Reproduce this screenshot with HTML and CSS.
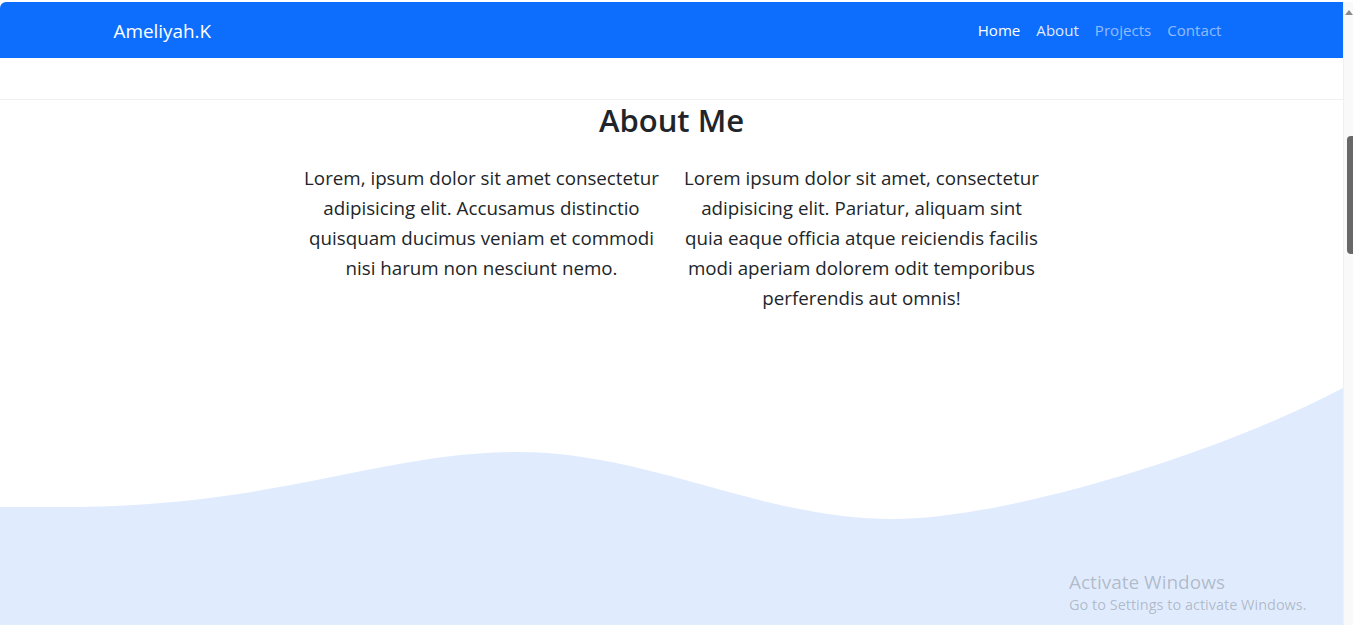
FILE: index.html
```html
<!DOCTYPE html>
<html lang="en">
<head>
<meta charset="utf-8">
<title>Ameliyah.K</title>
<link rel="stylesheet" href="styles.css">
</head>
<body>
<div class="window">
  <main class="page">
    <nav class="navbar">
      <div class="container nav-inner">
        <a class="brand" href="#">Ameliyah.K</a>
        <ul class="nav">
          <li><a class="nav-link active" href="#">Home</a></li>
          <li><a class="nav-link hover" href="#">About</a></li>
          <li><a class="nav-link" href="#">Projects</a></li>
          <li><a class="nav-link" href="#">Contact</a></li>
        </ul>
      </div>
    </nav>
    <div class="hero-spacer"></div>
    <section class="about">
      <div class="container">
        <h2 class="title">About Me</h2>
        <div class="row">
          <div class="col">
            <p>Lorem, ipsum dolor sit amet consectetur adipisicing elit. Accusamus distinctio quisquam ducimus veniam et commodi nisi harum non nesciunt nemo.</p>
          </div>
          <div class="col">
            <p>Lorem ipsum dolor sit amet, consectetur adipisicing elit. Pariatur, aliquam sint quia eaque officia atque reiciendis facilis modi aperiam dolorem odit temporibus perferendis aut omnis!</p>
          </div>
        </div>
      </div>
    </section>
    <svg class="wave" viewBox="0 0 1343 245" preserveAspectRatio="none" aria-hidden="true">
      <path d="M0,127 L60,127 C280,127 380,72 518,72 C650,72 760,139 893,139 C1000,139 1210,78 1343,8 L1343,245 L0,245 Z"/>
    </svg>
  </main>
  <div class="scrollbar" aria-hidden="true">
    <div class="scroll-arrow"></div>
    <div class="scroll-thumb"></div>
  </div>
  <div class="watermark">
    <div class="wm-title">Activate Windows</div>
    <div class="wm-sub">Go to Settings to activate Windows.</div>
  </div>
</div>
</body>
</html>
```

FILE: styles.css
```css
* { box-sizing: border-box; }

html, body {
  margin: 0;
  padding: 0;
  height: 625px;
  overflow: hidden;
  background: #fff;
}

body {
  font-family: "Open Sans", "Noto Sans", sans-serif;
  color: #212529;
}

.window {
  position: relative;
  display: flex;
  height: 625px;
  padding-top: 2px;
}

.page {
  flex: 1;
  display: flex;
  flex-direction: column;
  min-width: 0;
}

.container {
  width: 1140px;
  margin: 0 auto;
  padding: 0 12px;
}

/* Navbar */
.navbar {
  background: #0d6efd;
  height: 56px;
  border-top-left-radius: 6px;
  display: flex;
  align-items: center;
}

.nav-inner {
  display: flex;
  align-items: center;
  justify-content: space-between;
}

.brand {
  color: #fff;
  text-decoration: none;
  font-size: 18.9px;
  line-height: 30px;
  padding-top: 1px;
}

.nav {
  list-style: none;
  margin: 0;
  padding: 0;
  display: flex;
}

.nav-link {
  display: block;
  padding: 8px 8px;
  font-size: 15.1px;
  line-height: 24px;
  text-decoration: none;
  color: rgba(255, 255, 255, 0.55);
}

.nav-link.active { color: #fff; }
.nav-link.hover { color: rgba(255, 255, 255, 0.88); }

.hero-spacer {
  height: 42px;
  border-bottom: 1px solid #eef0f2;
}

/* About */
.about {
  text-align: center;
}

.title {
  margin: 1px 0 24px;
  font-size: 31px;
  font-weight: 600;
  line-height: 38px;
  color: #212529;
}

.row {
  display: flex;
  justify-content: center;
}

.col {
  width: 380px;
  padding: 0 12px;
}

.col p {
  margin: 0;
  font-size: 18.75px;
  line-height: 30px;
}

/* Wave */
.wave {
  display: block;
  margin-top: auto;
  width: 100%;
  height: 245px;
}

.wave path { fill: #e0ecfe; }

/* Fake scrollbar */
.scrollbar {
  width: 10px;
  background: #f9f9f9;
  border-left: 1px solid #f0f0f0;
  position: relative;
  flex-shrink: 0;
}

.scroll-arrow {
  margin: 8px auto 0;
  width: 0;
  height: 0;
  border-left: 4px solid transparent;
  border-right: 4px solid transparent;
  border-bottom: 5px solid #8a8a8a;
}

.scroll-thumb {
  position: absolute;
  top: 134px;
  left: 3px;
  width: 7px;
  height: 118px;
  background: #686868;
  border-radius: 4px 0 0 4px;
}

/* Windows watermark overlay */
.watermark {
  position: absolute;
  left: 1069px;
  top: 569px;
  color: rgba(60, 64, 72, 0.3);
  font-family: "Open Sans", "Noto Sans", sans-serif;
}

.wm-title {
  font-size: 19px;
  line-height: 26px;
}

.wm-sub {
  font-size: 14.5px;
  line-height: 20px;
}
```
